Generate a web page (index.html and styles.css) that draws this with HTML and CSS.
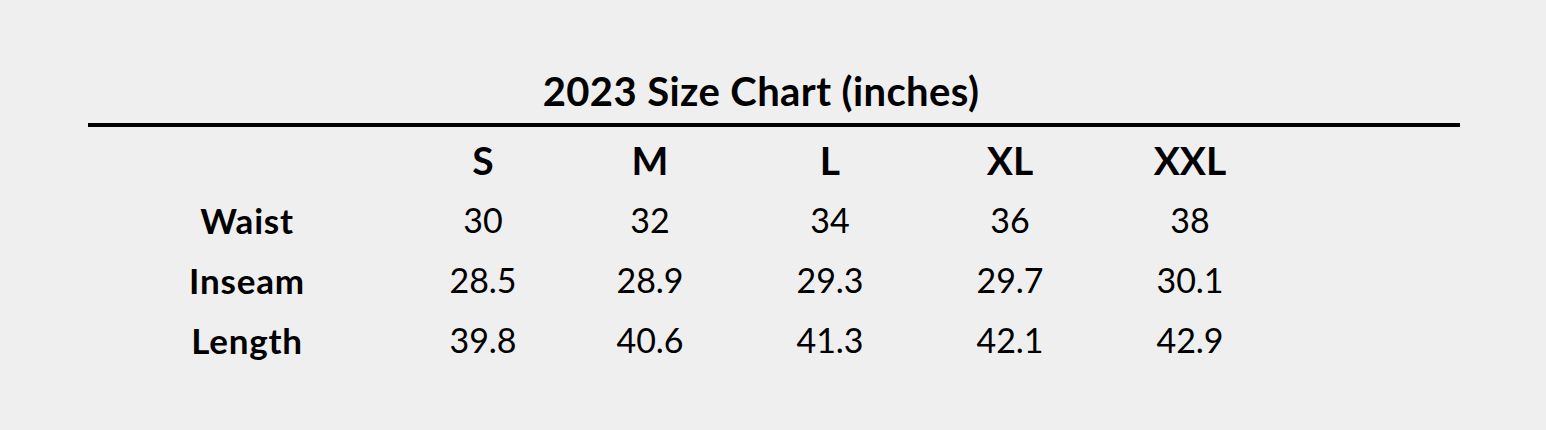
FILE: index.html
```html
<!DOCTYPE html>
<html lang="en">
<head>
<meta charset="utf-8">
<title>2023 Size Chart</title>
<link rel="stylesheet" href="styles.css">
</head>
<body>
<main class="chart">
  <h1 class="chart-title">2023 Size Chart (inches)</h1>
  <div class="grid">
    <div class="cell head"></div>
    <div class="cell head">S</div>
    <div class="cell head">M</div>
    <div class="cell head">L</div>
    <div class="cell head">XL</div>
    <div class="cell head">XXL</div>
    <div class="cell head"></div>

    <div class="cell label">Waist</div>
    <div class="cell val">30</div>
    <div class="cell val">32</div>
    <div class="cell val">34</div>
    <div class="cell val">36</div>
    <div class="cell val">38</div>
    <div class="cell val"></div>

    <div class="cell label">Inseam</div>
    <div class="cell val">28.5</div>
    <div class="cell val">28.9</div>
    <div class="cell val">29.3</div>
    <div class="cell val">29.7</div>
    <div class="cell val">30.1</div>
    <div class="cell val"></div>

    <div class="cell label">Length</div>
    <div class="cell val">39.8</div>
    <div class="cell val">40.6</div>
    <div class="cell val">41.3</div>
    <div class="cell val">42.1</div>
    <div class="cell val">42.9</div>
    <div class="cell val"></div>
  </div>
</main>
</body>
</html>
```

FILE: styles.css
```css
html, body {
  margin: 0;
  padding: 0;
  background: #efefef;
  height: 100%;
}

body {
  font-family: Lato, "Open Sans", "Liberation Sans", sans-serif;
  color: #000;
}

.chart {
  margin: 0 86px 0 88px;
  padding-top: 66px;
}

.chart-title {
  margin: 0;
  padding: 0 26px 7px 0;
  font-size: 40px;
  letter-spacing: 0.4px;
  line-height: 50px;
  font-weight: 700;
  text-align: center;
  border-bottom: 4px solid #000;
}

.grid {
  display: grid;
  grid-template-columns: 318px 154px repeat(4, 180px) 1fr;
}

.cell {
  text-align: center;
  white-space: nowrap;
}

.head {
  font-size: 39px;
  font-weight: 700;
  line-height: 60px;
  padding-top: 3px;
}

.label {
  font-size: 35px;
  letter-spacing: 0.8px;
  font-weight: 700;
  line-height: 60px;
}

.val {
  font-size: 34px;
  font-weight: 400;
  line-height: 60px;
}
```
